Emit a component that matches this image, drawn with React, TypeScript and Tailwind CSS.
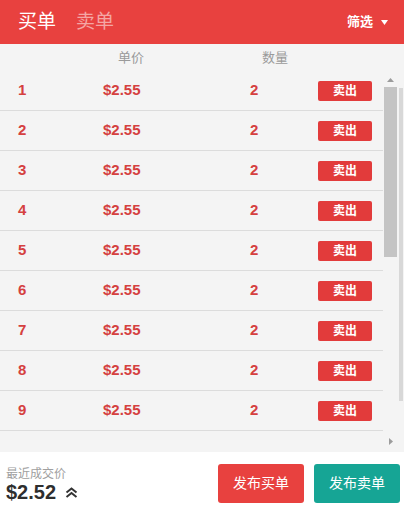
const font = { fontFamily: '"Liberation Sans", "Noto Sans CJK SC", sans-serif' };

const orders = [1, 2, 3, 4, 5, 6, 7, 8, 9].map((n) => ({ id: n, price: "$2.55", qty: 2 }));

function OrderRow({ id, price, qty }: { id: number; price: string; qty: number }) {
  return (
    <div className="flex h-[40px] items-center border-b border-[#dcdcdc] text-[15px] font-bold text-[#d5403f]">
      <span className="w-[103px] pl-[18px]">{id}</span>
      <span className="w-[147px]">{price}</span>
      <span className="w-[68px]">{qty}</span>
      <button className="flex h-[20px] w-[54px] items-center justify-center rounded-[2px] bg-[#e23b3b] text-[12px] font-bold text-white">
        卖出
      </button>
    </div>
  );
}

export default function App() {
  return (
    <div className="flex h-[506px] w-[404px] flex-col overflow-hidden bg-white" style={font}>
      {/* Tabs */}
      <div className="flex h-[44px] shrink-0 items-center bg-[#e8413f] pl-[18px] pr-[16px]">
        <span className="text-[19px] text-white">买单</span>
        <span className="ml-[20px] text-[19px] text-[#f4a6a4]">卖单</span>
        <div className="ml-auto flex items-center gap-[8px] text-[13px] font-bold text-white">
          筛选
          <svg width="7" height="5" viewBox="0 0 7 5">
            <path d="M0 0h7L3.5 5z" fill="#fff" />
          </svg>
        </div>
      </div>

      {/* List */}
      <div className="flex h-[408px] shrink-0 bg-[#f4f4f4]">
        <div className="flex w-[383px] flex-col">
          <div className="flex h-[27px] items-center text-[13px] text-[#9a9a9a]">
            <span className="ml-[118px]">单价</span>
            <span className="ml-[118px]">数量</span>
          </div>
          {orders.map((o) => (
            <OrderRow key={o.id} {...o} />
          ))}
        </div>

        {/* Scrollbars */}
        <div className="flex flex-1 flex-col">
          <div className="flex flex-1 pt-[28px]">
            <div className="flex w-[14px] flex-col items-center pl-[1px]">
              <div className="flex h-[15px] items-center">
                <svg width="7" height="4" viewBox="0 0 7 4">
                  <path d="M0 4h7L3.5 0z" fill="#9c9c9c" />
                </svg>
              </div>
              <div className="h-[170px] w-[13px] bg-[#c4c4c4]" />
            </div>
            <div className="ml-[2px] mt-[16px] mb-[30px] w-[4px] bg-[#d8d8d8]" />
          </div>
          <div className="flex h-[21px] items-center pl-[6px]">
            <svg width="4" height="7" viewBox="0 0 4 7">
              <path d="M0 0v7l4-3.5z" fill="#9c9c9c" />
            </svg>
          </div>
        </div>
      </div>

      {/* Footer */}
      <div className="flex flex-1 items-end pb-[3px] pl-[6px] pr-[4px]">
        <div className="flex flex-col">
          <span className="text-[12px] leading-[14px] text-[#a0a0a0]">最近成交价</span>
          <div className="flex items-center gap-[9px]">
            <span className="text-[20px] font-bold leading-[22px] text-[#2e2e2e]">$2.52</span>
            <svg width="13" height="11" viewBox="0 0 13 11" fill="none" stroke="#333" strokeWidth="2">
              <path d="M1.5 5.5 6.5 1.5l5 4" />
              <path d="M1.5 10 6.5 6l5 4" />
            </svg>
          </div>
        </div>
        <button className="ml-auto h-[39px] w-[86px] rounded-[3px] bg-[#e8413f] text-[14px] text-white">
          发布买单
        </button>
        <button className="ml-[10px] h-[39px] w-[86px] rounded-[3px] bg-[#16a595] text-[14px] text-white">
          发布卖单
        </button>
      </div>
    </div>
  );
}
